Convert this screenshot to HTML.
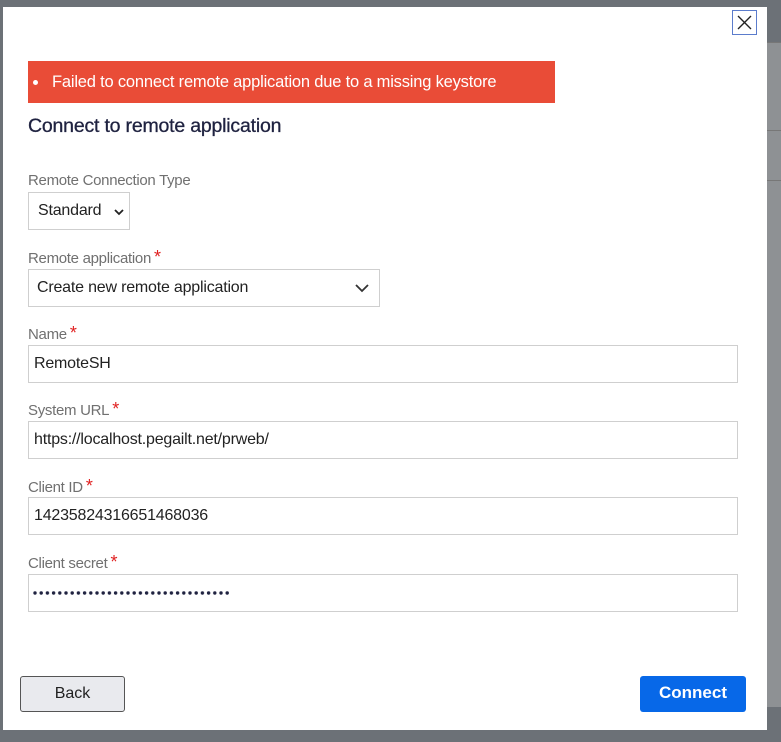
<!DOCTYPE html>
<html><head><style>
*{box-sizing:border-box;margin:0;padding:0}
body{width:781px;height:742px;background:#6c7177;position:relative;overflow:hidden;font-family:"Liberation Sans",sans-serif}
.strip{position:absolute;left:767px;top:42px;width:14px;height:665px;background:#8e9194}
.strip i{position:absolute;left:0;width:14px;height:1px;background:#777}
.modal{position:absolute;left:3px;top:7px;width:764px;height:723px;background:#fff}
.abs{position:absolute}
.err{left:25px;top:54px;width:527px;height:42px;background:#e94c37;color:#fff;font-size:16.5px;line-height:42px;padding-left:24px;letter-spacing:-0.2px}
.err:before{content:"";position:absolute;left:5px;top:19px;width:5px;height:5px;border-radius:50%;background:#fff}
h1{position:absolute;left:25px;top:108px;font-size:19.5px;font-weight:normal;color:#1f2240;letter-spacing:-0.2px;-webkit-text-stroke:0.3px #1f2240}
.lbl{position:absolute;left:25px;font-size:15px;color:#707070;letter-spacing:-0.3px}
.lbl b{color:#e02020;font-weight:normal;font-size:18px;margin-left:3px}
.inp{position:absolute;left:25px;width:710px;height:38px;border:1px solid #cfcfcf;font-size:16px;color:#222;line-height:36px;padding-left:5px;letter-spacing:-0.2px}
.btn{position:absolute;font-size:16px;text-align:center;line-height:34px;height:36px;border-radius:3px}
</style></head><body>
<div class="strip"><i style="top:88px"></i><i style="top:138px"></i><i style="top:0"></i></div>
<div class="modal">
<div class="abs" style="left:729px;top:3px;width:25px;height:25px;border:1px solid #5b7ccc"><svg width="23" height="23"><path d="M5 5l13 13M18 5L5 18" stroke="#222" stroke-width="1.4"/></svg></div>
<div class="abs err">Failed to connect remote application due to a missing keystore</div>
<h1>Connect to remote application</h1>
<div class="lbl" style="top:165px">Remote Connection Type</div>
<div class="inp" style="top:185px;width:102px;padding-left:9px">Standard<svg style="position:absolute;right:5px;top:16px" width="10" height="7"><path d="M1 1l4 4 4-4" stroke="#222" stroke-width="1.8" fill="none"/></svg></div>
<div class="lbl" style="top:240px">Remote application<b>*</b></div>
<div class="inp" style="top:262px;width:352px;padding-left:8px">Create new remote application<svg style="position:absolute;right:10px;top:14px" width="14" height="9"><path d="M1 1l6 6 6-6" stroke="#333" stroke-width="1.8" fill="none"/></svg></div>
<div class="lbl" style="top:316px">Name<b>*</b></div>
<div class="inp" style="top:338px">RemoteSH</div>
<div class="lbl" style="top:392px">System URL<b>*</b></div>
<div class="inp" style="top:414px">https://localhost.pegailt.net/prweb/</div>
<div class="lbl" style="top:469px">Client ID<b>*</b></div>
<div class="inp" style="top:490px">14235824316651468036</div>
<div class="lbl" style="top:545px">Client secret<b>*</b></div>
<div class="inp" style="top:567px"><svg style="position:absolute;left:3px;top:15px" width="205" height="6"><defs><pattern id="d" width="6.2" height="6" patternUnits="userSpaceOnUse"><circle cx="3" cy="3" r="1.7" fill="#1f2240"/></pattern></defs><rect width="199" height="6" fill="url(#d)"/></svg></div>
<div class="btn" style="left:17px;top:669px;width:105px;background:#e9eaee;border:1px solid #555;color:#222">Back</div>
<div class="btn" style="left:637px;top:669px;width:106px;background:#0768e8;color:#fff;font-weight:bold;font-size:17px">Connect</div>
</div>
</body></html>
